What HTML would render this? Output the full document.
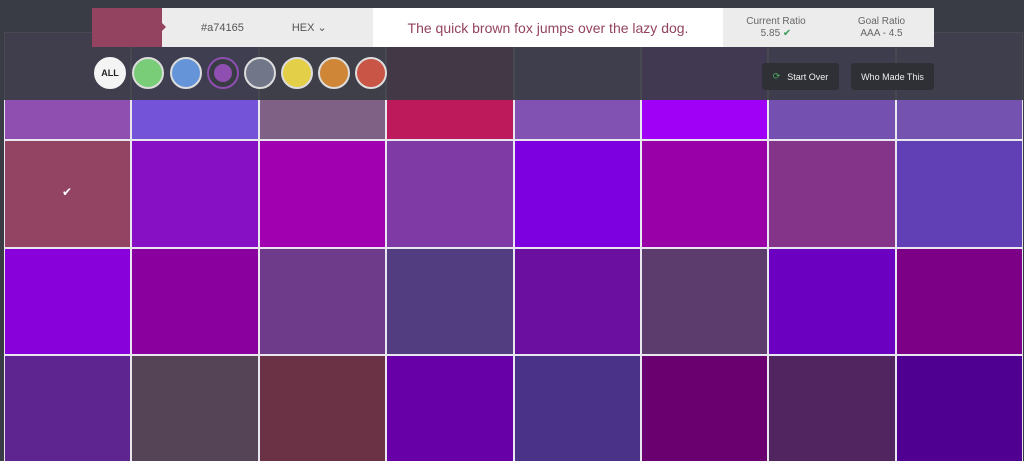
<!DOCTYPE html>
<html style="width:1024px;height:461px;overflow:hidden"><head><meta charset="utf-8"><style>
*{box-sizing:border-box;margin:0;padding:0}
body{width:1024px;height:461px;overflow:hidden;background:#3a3c45;font-family:"Liberation Sans",sans-serif;position:relative}
.grid{position:absolute;left:4px;top:32px;width:1019px;height:429px;overflow:hidden;background:#e8e6ee;padding:1px;display:grid;grid-template-columns:repeat(8,1fr);grid-auto-rows:105.8px;gap:2px}
.grid div{position:relative}
.ov{position:absolute;left:0;top:0;width:1024px;height:100px;background:rgba(58,60,69,0.93)}
.bar{position:absolute;left:92px;top:8px;width:842px;height:39px;display:flex;font-size:11px;color:#555}
.sw{width:70px;background:#93425f;position:relative}
.sw:after{content:"";position:absolute;right:-4px;top:15px;border-left:4px solid #93425f;border-top:4px solid transparent;border-bottom:4px solid transparent}
.g1{width:211px;background:#ececec;display:flex;align-items:center}
.txt{width:350px;background:#fff;display:flex;align-items:center;justify-content:center;color:#93425f;font-size:14px}
.g2{width:211px;background:#ececec;display:flex;align-items:center;font-size:10px;color:#666;text-align:center;line-height:12px}
.c{position:absolute;top:57px;width:32px;height:32px;border-radius:50%;border:2px solid #ddd}
.btn{position:absolute;top:63px;height:27px;background:#2f3036;border-radius:3px;color:#eee;font-size:9px;display:flex;align-items:center;justify-content:center}
</style></head><body>
<div class="grid">
<div style="background:#8e4fb0"></div><div style="background:#7553d8"></div><div style="background:#7f6186"></div><div style="background:#bc1a5a"></div><div style="background:#8152b1"></div><div style="background:#a000f5"></div><div style="background:#7450b0"></div><div style="background:#7453b0"></div>
<div style="background:#934462"><span style="position:absolute;left:57px;top:44px;color:#fff;font-size:12px">✔</span></div><div style="background:#8810c4"></div><div style="background:#a000b0"></div><div style="background:#7f3aa5"></div><div style="background:#7c00e0"></div><div style="background:#9a00a8"></div><div style="background:#84358a"></div><div style="background:#6140b5"></div>
<div style="background:#8800da"></div><div style="background:#8a009e"></div><div style="background:#6e3a8a"></div><div style="background:#523d80"></div><div style="background:#6b0fa0"></div><div style="background:#5c3c6c"></div><div style="background:#6c00c0"></div><div style="background:#7b0085"></div>
<div style="background:#5e2590"></div><div style="background:#554356"></div><div style="background:#6a3244"></div><div style="background:#6800a8"></div><div style="background:#4a3288"></div><div style="background:#6a0070"></div><div style="background:#502560"></div><div style="background:#4f0090"></div>
</div>
<div class="ov"></div>
<div style="position:absolute;left:0;top:0;width:1024px;height:32px;background:#3a3c45"></div>
<div class="bar">
<div class="sw"></div>
<div class="g1"><span style="margin-left:39px">#a74165</span><span style="margin-left:48px">HEX &#8964;</span></div>
<div class="txt">The quick brown fox jumps over the lazy dog.</div>
<div class="g2"><div style="width:106px">Current Ratio<br>5.85 <span style="color:#3a9a5a">✔</span></div><div style="width:105px">Goal Ratio<br>AAA - 4.5</div></div>
</div>
<div class="c" style="left:94px;background:#f4f4f4;border-color:#f4f4f4;font-size:9px;font-weight:bold;color:#222;display:flex;align-items:center;justify-content:center">ALL</div>
<div class="c" style="left:132px;background:#79cc78"></div>
<div class="c" style="left:170px;background:#6595d8"></div>
<div class="c" style="left:207px;background:#3a3c45;border-color:#8e4fb0"><div style="position:absolute;left:5px;top:5px;width:18px;height:18px;border-radius:50%;background:#8e4fb0"></div></div>
<div class="c" style="left:244px;background:#717788"></div>
<div class="c" style="left:281px;background:#e4cf48"></div>
<div class="c" style="left:318px;background:#cf8636"></div>
<div class="c" style="left:355px;background:#c85545"></div>
<div class="btn" style="left:762px;width:77px"><span style="color:#4caf60;margin-right:7px">&#10227;</span>Start Over</div>
<div class="btn" style="left:851px;width:83px">Who Made This</div>
</body></html>
